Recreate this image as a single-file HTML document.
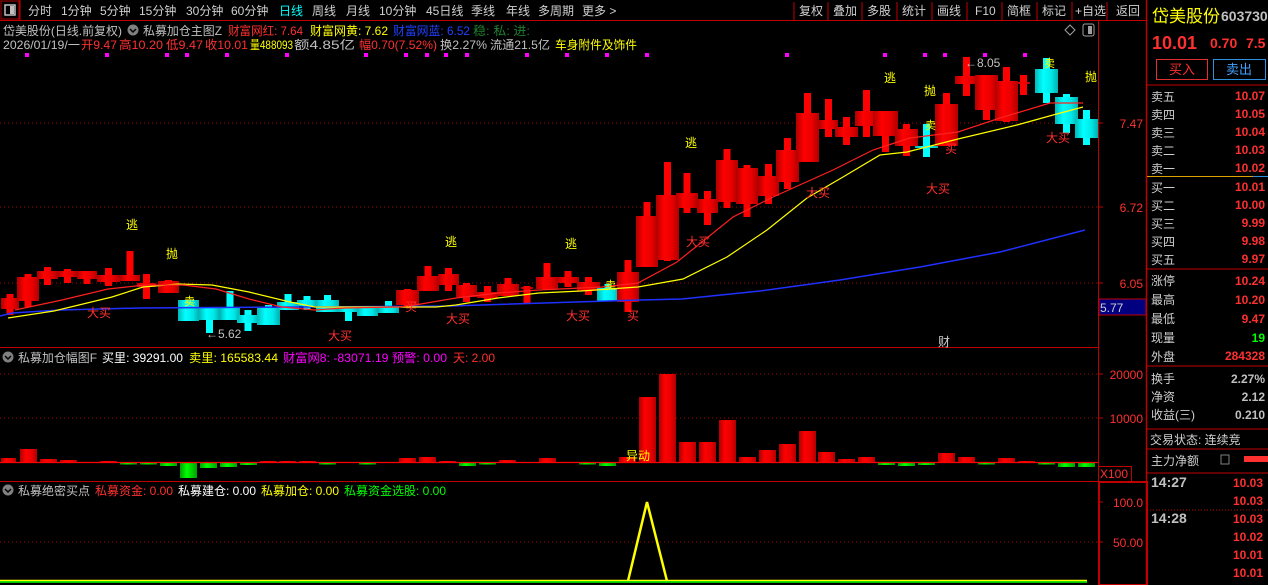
<!DOCTYPE html>
<html><head><meta charset="utf-8">
<style>
html,body{margin:0;padding:0;background:#000;width:1268px;height:585px;overflow:hidden}
svg{display:block}
text{font-family:"Liberation Sans","Noto Sans CJK SC",sans-serif;font-size:12px}
.w{fill:#d0d0d0}.r{fill:#ff3030}.y{fill:#ffff00}.g{fill:#c0c0c0}
.lab{font-size:15px;fill:#d0d0d0}
.val{font-size:14px;font-weight:bold;fill:#ff3030;text-anchor:end}
.ax{fill:#ff3030;text-anchor:end;font-size:12px}
</style></head><body>
<svg id="s" width="1268" height="585" viewBox="0 0 1268 585" xmlns="http://www.w3.org/2000/svg">
<defs>
<linearGradient id="gr" x1="0" x2="1" y1="0" y2="0"><stop offset="0" stop-color="#b00000"/><stop offset="0.35" stop-color="#ff0000"/><stop offset="0.7" stop-color="#e80000"/><stop offset="1" stop-color="#b00000"/></linearGradient>
<linearGradient id="gc" x1="0" x2="1" y1="0" y2="0"><stop offset="0" stop-color="#00b8b8"/><stop offset="0.35" stop-color="#00ffff"/><stop offset="0.7" stop-color="#00e8e8"/><stop offset="1" stop-color="#00b0b0"/></linearGradient>
<linearGradient id="gg" x1="0" x2="1" y1="0" y2="0"><stop offset="0" stop-color="#00a000"/><stop offset="0.4" stop-color="#00ff00"/><stop offset="1" stop-color="#00a000"/></linearGradient>
</defs>
<!-- toolbar -->
<rect x="1" y="1" width="18" height="18" fill="none" stroke="#b00000"/>
<rect x="5" y="5" width="10" height="10" fill="none" stroke="#c0c0c0" stroke-width="1.5"/><rect x="10" y="6" width="4" height="8" fill="#c0c0c0"/>
<line x1="20" y1="0" x2="20" y2="20" stroke="#c00000"/>
<g class="w">
<text x="28" y="15">分时</text><text x="61" y="15">1分钟</text><text x="100" y="15">5分钟</text><text x="139" y="15">15分钟</text><text x="186" y="15">30分钟</text><text x="231" y="15">60分钟</text><text x="279" y="15" style="fill:#00ffff">日线</text><text x="312" y="15">周线</text><text x="346" y="15">月线</text><text x="379" y="15">10分钟</text><text x="426" y="15">45日线</text><text x="471" y="15">季线</text><text x="506" y="15">年线</text><text x="538" y="15">多周期</text><text x="582" y="15">更多 &gt;</text>
<text x="799" y="15">复权</text><text x="833" y="15">叠加</text><text x="867" y="15">多股</text><text x="902" y="15">统计</text><text x="937" y="15">画线</text><text x="975" y="15">F10</text><text x="1007" y="15">简框</text><text x="1042" y="15">标记</text><text x="1075" y="15">+自选</text><text x="1116" y="15">返回</text>
</g>
<g stroke="#c00000"><line x1="794" y1="2" x2="794" y2="20"/><line x1="828" y1="2" x2="828" y2="20"/><line x1="862" y1="2" x2="862" y2="20"/><line x1="897" y1="2" x2="897" y2="20"/><line x1="932" y1="2" x2="932" y2="20"/><line x1="967" y1="2" x2="967" y2="20"/><line x1="1002" y1="2" x2="1002" y2="20"/><line x1="1037" y1="2" x2="1037" y2="20"/><line x1="1072" y1="2" x2="1072" y2="20"/><line x1="1107" y1="2" x2="1107" y2="20"/></g>
<line x1="0" y1="20.5" x2="1146" y2="20.5" stroke="#c00000"/>
<!-- frame lines -->
<line x1="1098.5" y1="21" x2="1098.5" y2="585" stroke="#c00000"/>
<line x1="1146.5" y1="0" x2="1146.5" y2="585" stroke="#c00000" stroke-width="1.5"/>
<line x1="0" y1="347.5" x2="1098" y2="347.5" stroke="#c00000"/>
<line x1="0" y1="481.5" x2="1098" y2="481.5" stroke="#c00000"/>
<g stroke="#a00000" stroke-dasharray="1,3"><line x1="0" y1="123" x2="1098" y2="123"/><line x1="0" y1="207" x2="1098" y2="207"/><line x1="0" y1="283" x2="1098" y2="283"/><line x1="0" y1="374" x2="1098" y2="374"/><line x1="0" y1="418" x2="1098" y2="418"/><line x1="0" y1="542" x2="1098" y2="542"/></g>
<!-- info rows -->
<text x="3" y="35" class="g" textLength="119" lengthAdjust="spacingAndGlyphs">岱美股份(日线.前复权)</text>
<circle cx="133" cy="30" r="5.5" fill="#808080"/><path d="M130 29 L133 32 L136 29" stroke="#000" fill="none" stroke-width="1.5"/>
<text x="143" y="35" class="g" textLength="79" lengthAdjust="spacingAndGlyphs">私募加仓主图Z</text>
<text x="228" y="35" class="r" textLength="75" lengthAdjust="spacingAndGlyphs">财富网红: 7.64</text>
<text x="310" y="35" class="y" textLength="78" lengthAdjust="spacingAndGlyphs">财富网黄: 7.62</text>
<text x="393" y="35" style="fill:#2040ff" textLength="77" lengthAdjust="spacingAndGlyphs">财富网蓝: 6.52</text>
<text x="473" y="35" style="fill:#208030" textLength="57" lengthAdjust="spacingAndGlyphs">稳: 私: 进:</text>
<text x="3" y="49" class="g" textLength="77" lengthAdjust="spacingAndGlyphs">2026/01/19/一</text>
<text x="81" y="49" class="r" textLength="36" lengthAdjust="spacingAndGlyphs">开9.47</text>
<text x="119" y="49" class="r" textLength="44" lengthAdjust="spacingAndGlyphs">高10.20</text>
<text x="166" y="49" class="r" textLength="37" lengthAdjust="spacingAndGlyphs">低9.47</text>
<text x="205" y="49" class="r" textLength="43" lengthAdjust="spacingAndGlyphs">收10.01</text>
<text x="250" y="49" class="y" textLength="43" lengthAdjust="spacingAndGlyphs">量488093</text>
<text x="294" y="49" class="g" textLength="61" lengthAdjust="spacingAndGlyphs">额4.85亿</text>
<text x="359" y="49" class="r" textLength="78" lengthAdjust="spacingAndGlyphs">幅0.70(7.52%)</text>
<text x="440" y="49" class="g" textLength="47" lengthAdjust="spacingAndGlyphs">换2.27%</text>
<text x="490" y="49" class="g" textLength="60" lengthAdjust="spacingAndGlyphs">流通21.5亿</text>
<text x="555" y="49" class="y" textLength="82" lengthAdjust="spacingAndGlyphs">车身附件及饰件</text>
<path d="M1070 25 L1075 30 L1070 35 L1065 30 Z" fill="none" stroke="#a0a0a0"/>
<rect x="1083" y="24" width="11" height="12" rx="2" fill="none" stroke="#a0a0a0"/><rect x="1088" y="26" width="4" height="8" fill="#a0a0a0"/>
<g id="dots" fill="#ff00ff"></g>
<g id="cand"></g>
<!-- MAs -->
<polyline fill="none" stroke="#2030ff" stroke-width="1.5" points="0,316 12,313 60,310 140,308 300,307 450,306 640,300 682,299 760,291 840,280 920,267 1000,252 1085,230"/>
<polyline fill="none" stroke="#ffff00" stroke-width="1.2" points="8,318 54,311 112,297 143,287 178,284 212,285 249,292 290,302 315,307 353,307 398,307 436,307 456,305 498,298 539,293 581,291 638,287 683,279 727,257 767,230 807,198 843,177 880,155 907,152 958,139 1017,125 1053,115 1083,107"/>
<polyline fill="none" stroke="#ff2020" stroke-width="1.2" points="15,310 62,300 108,289 145,285 183,285 216,289 249,299 282,307 315,310 344,308 398,307 415,305 456,298 498,293 539,290 602,287 638,283 677,262 733,217 773,197 833,170 873,150 910,138 958,132 1000,118 1050,103 1083,103"/>
<!-- labels -->
<g class="y"><text x="126" y="229">逃</text><text x="166" y="258">抛</text><text x="445" y="246">逃</text><text x="565" y="248">逃</text><text x="685" y="147">逃</text><text x="884" y="82">逃</text><text x="924" y="95">抛</text><text x="1085" y="81">抛</text>
<text x="184" y="305" style="font-size:11px">卖</text><text x="605" y="289" style="font-size:11px">卖</text><text x="925" y="129" style="font-size:11px">卖</text><text x="1044" y="67" style="font-size:11px">卖</text></g>
<g class="r"><text x="87" y="317">大买</text><text x="446" y="323">大买</text><text x="566" y="320">大买</text><text x="686" y="246">大买</text><text x="806" y="197">大买</text><text x="926" y="193">大买</text><text x="1046" y="142">大买</text><text x="627" y="320">买</text><text x="945" y="153">买</text><text x="405" y="311">买</text><text x="328" y="340">大买</text></g>
<text x="206" y="338" class="g">←5.62</text>
<text x="965" y="67" class="g">←8.05</text>
<text x="938" y="346" class="w">财</text>
<!-- axis main -->
<g stroke="#c00000"><line x1="1098" y1="123" x2="1103" y2="123"/><line x1="1098" y1="207" x2="1103" y2="207"/><line x1="1098" y1="283" x2="1103" y2="283"/><line x1="1098" y1="374" x2="1103" y2="374"/><line x1="1098" y1="418" x2="1103" y2="418"/><line x1="1098" y1="502" x2="1103" y2="502"/><line x1="1098" y1="542" x2="1103" y2="542"/></g>
<text x="1143" y="128" class="ax">7.47</text><text x="1143" y="212" class="ax">6.72</text><text x="1143" y="288" class="ax">6.05</text>
<rect x="1099" y="299" width="47" height="16" fill="#000080" stroke="#c00000"/><text x="1100" y="312" style="fill:#d0d0d0">5.77</text>
<!-- panel 1 -->
<circle cx="8" cy="357" r="5.5" fill="#808080"/><path d="M5 356 L8 359 L11 356" stroke="#000" fill="none" stroke-width="1.5"/>
<text x="18" y="362" class="g" textLength="79" lengthAdjust="spacingAndGlyphs">私募加仓幅图F</text>
<text x="102" y="362" style="fill:#fff" textLength="81" lengthAdjust="spacingAndGlyphs">买里: 39291.00</text>
<text x="189" y="362" class="y" textLength="89" lengthAdjust="spacingAndGlyphs">卖里: 165583.44</text>
<text x="283" y="362" style="fill:#ff00ff" textLength="164" lengthAdjust="spacingAndGlyphs">财富网8: -83071.19 预警: 0.00</text>
<text x="453" y="362" class="r" textLength="42" lengthAdjust="spacingAndGlyphs">天: 2.00</text>
<g id="vol"></g>
<line x1="0" y1="462.5" x2="1098" y2="462.5" stroke="#ff0000" stroke-width="1.2"/>
<text x="626" y="460" class="y">异动</text>
<text x="1143" y="379" class="ax">20000</text><text x="1143" y="423" class="ax">10000</text>
<rect x="1098.5" y="466.5" width="33" height="15" fill="none" stroke="#c00000"/><text x="1100" y="478" class="r">X100</text>
<!-- panel 2 -->
<circle cx="8" cy="490" r="5.5" fill="#808080"/><path d="M5 489 L8 492 L11 489" stroke="#000" fill="none" stroke-width="1.5"/>
<text x="18" y="495" class="g" textLength="72" lengthAdjust="spacingAndGlyphs">私募绝密买点</text>
<text x="95" y="495" class="r" textLength="78" lengthAdjust="spacingAndGlyphs">私募资金: 0.00</text>
<text x="178" y="495" style="fill:#fff" textLength="78" lengthAdjust="spacingAndGlyphs">私募建仓: 0.00</text>
<text x="261" y="495" class="y" textLength="78" lengthAdjust="spacingAndGlyphs">私募加仓: 0.00</text>
<text x="344" y="495" style="fill:#00ff00" textLength="102" lengthAdjust="spacingAndGlyphs">私募资金选股: 0.00</text>
<line x1="0" y1="580.5" x2="1087" y2="580.5" stroke="#ffff00" stroke-width="1.5"/>
<line x1="0" y1="582" x2="1087" y2="582" stroke="#00ff00" stroke-width="1.5"/>
<polyline points="628,581 647,502 667,581" fill="none" stroke="#ffff00" stroke-width="2.5"/>
<rect x="1099" y="482" width="48" height="103" fill="none" stroke="#c00000" stroke-width="2"/>
<text x="1143" y="507" class="ax">100.0</text><text x="1143" y="547" class="ax">50.00</text>
<!-- right panel -->
<text x="1152" y="22" style="font-size:17px;fill:#ffff00">岱美股份</text>
<text x="1221" y="21" style="font-size:14px;font-weight:bold;fill:#c0c0c0">603730</text>
<text x="1152" y="49" style="font-size:18px;font-weight:bold;fill:#ff3030">10.01</text>
<text x="1210" y="48" style="font-size:14px;font-weight:bold;fill:#ff3030">0.70</text>
<text x="1246" y="48" style="font-size:14px;font-weight:bold;fill:#ff3030">7.5</text>
<rect x="1156.5" y="59.5" width="51" height="20" fill="none" stroke="#e03030"/><text x="1169" y="74" style="fill:#ff3030;font-size:13px">买入</text>
<rect x="1213.5" y="59.5" width="52" height="20" fill="none" stroke="#3090e0"/><text x="1226" y="74" style="fill:#40a0ff;font-size:13px">卖出</text>
<g stroke="#c00000"><line x1="1147" y1="85" x2="1268" y2="85"/><line x1="1147" y1="269" x2="1268" y2="269"/><line x1="1147" y1="366" x2="1268" y2="366"/><line x1="1147" y1="429" x2="1268" y2="429"/><line x1="1147" y1="449" x2="1268" y2="449"/><line x1="1147" y1="473" x2="1268" y2="473"/></g>
<line x1="1147" y1="176.5" x2="1253" y2="176.5" stroke="#e0a000"/><line x1="1253" y1="176.5" x2="1268" y2="176.5" stroke="#3090e0"/>
<line x1="1147" y1="510" x2="1268" y2="510" stroke="#c00000" stroke-dasharray="1,2"/>
<g class="lab">
<text x="1151" y="101">卖五</text><text x="1151" y="119">卖四</text><text x="1151" y="137">卖三</text><text x="1151" y="155">卖二</text><text x="1151" y="173">卖一</text>
<text x="1151" y="192">买一</text><text x="1151" y="210">买二</text><text x="1151" y="228">买三</text><text x="1151" y="246">买四</text><text x="1151" y="264">买五</text>
<text x="1151" y="285">涨停</text><text x="1151" y="304">最高</text><text x="1151" y="323">最低</text><text x="1151" y="342">现量</text><text x="1151" y="361">外盘</text>
<text x="1151" y="383">换手</text><text x="1151" y="401">净资</text><text x="1151" y="419">收益(三)</text>
<text x="1150" y="444">交易状态: 连续竞</text><text x="1151" y="465">主力净额</text>
</g>
<rect x="1221" y="455" width="8" height="9" fill="none" stroke="#808080"/>
<rect x="1244" y="456" width="24" height="6" fill="#ff3030"/>
<g class="val">
<text x="1265" y="100">10.07</text><text x="1265" y="118">10.05</text><text x="1265" y="136">10.04</text><text x="1265" y="154">10.03</text><text x="1265" y="172">10.02</text>
<text x="1265" y="191">10.01</text><text x="1265" y="209">10.00</text><text x="1265" y="227">9.99</text><text x="1265" y="245">9.98</text><text x="1265" y="263">9.97</text>
<text x="1265" y="285">10.24</text><text x="1265" y="304">10.20</text><text x="1265" y="323">9.47</text><text x="1265" y="342" style="fill:#00ff00">19</text><text x="1265" y="360">284328</text>
<text x="1265" y="383" style="fill:#c0c0c0">2.27%</text><text x="1265" y="401" style="fill:#c0c0c0">2.12</text><text x="1265" y="419" style="fill:#c0c0c0">0.210</text>
<text x="1263" y="487">10.03</text><text x="1263" y="505">10.03</text><text x="1263" y="523">10.03</text><text x="1263" y="541">10.02</text><text x="1263" y="559">10.01</text><text x="1263" y="577">10.01</text>
</g>
<text x="1151" y="487" style="font-size:14px;font-weight:bold;fill:#c0c0c0">14:27</text>
<text x="1151" y="523" style="font-size:14px;font-weight:bold;fill:#c0c0c0">14:28</text>
</svg>
<script>
var NS="http://www.w3.org/2000/svg";
function R(p,x,y,w,h,f){var e=document.createElementNS(NS,"rect");e.setAttribute("x",x);e.setAttribute("y",y);e.setAttribute("width",w);e.setAttribute("height",Math.max(h,1.5));e.setAttribute("fill",f);p.appendChild(e);}
var C=[[1,19,298,309,294,315,'r'],[17,39,277,301,274,307,'r'],[37,58,271,279,267,285,'r'],[58,77,271,277,269,283,'r'],[77,97,271,279,271,284,'r'],[97,120,275,282,268,286,'r'],[120,140,275,281,251,281,'r'],[137,156,283,287,274,299,'r'],[158,179,281,293,280,293,'r'],[178,199,300,321,300,321,'c'],[199,220,307,320,307,333,'c'],[220,240,307,320,291,320,'c'],[237,259,315,323,310,331,'c'],[257,280,308,325,305,325,'c'],[277,299,302,310,294,310,'c'],[297,317,300,306,296,310,'c'],[316,339,300,312,295,312,'c'],[338,359,307,312,307,321,'c'],[357,378,307,316,307,316,'c'],[378,399,306,313,301,313,'c'],[396,419,290,305,289,306,'r'],[417,439,276,291,266,291,'r'],[438,459,274,285,268,291,'r'],[456,477,285,297,283,302,'r'],[477,498,292,298,286,302,'r'],[497,519,284,296,278,296,'r'],[521,533,287,289,286,303,'r'],[536,558,277,289,263,290,'r'],[557,579,277,283,271,287,'r'],[577,600,282,291,277,295,'r'],[597,619,288,301,284,301,'c'],[617,639,272,302,260,312,'r'],[636,658,216,267,202,267,'r'],[656,679,195,260,162,261,'r'],[676,698,193,208,173,213,'r'],[697,718,199,213,191,225,'r'],[716,738,160,202,149,208,'r'],[736,758,168,204,165,217,'r'],[758,779,176,196,164,204,'r'],[776,799,150,182,138,189,'r'],[796,819,113,162,93,162,'r'],[819,838,120,129,99,137,'r'],[835,858,127,137,117,145,'r'],[855,878,111,126,90,137,'r'],[873,898,111,136,111,152,'r'],[895,918,129,146,124,156,'r'],[915,938,146,148,124,157,'c'],[935,958,104,146,93,146,'r'],[955,978,76,84,57,96,'r'],[975,998,75,110,75,120,'r'],[995,1018,81,121,67,122,'r'],[1017,1030,82,84,75,95,'r'],[1035,1058,69,93,58,103,'c'],[1055,1078,97,124,94,133,'c'],[1075,1098,119,138,110,145,'c']];
var g=document.getElementById("cand");
C.forEach(function(c){var f=c[6]=='r'?'#ff0000':'#00ffff',gf=c[6]=='r'?'url(#gr)':'url(#gc)';var m=(c[0]+c[1])/2;R(g,m-3.5,c[4],7,c[5]-c[4],f);R(g,c[0],c[2],c[1]-c[0],c[3]-c[2],gf);});
var V=[[1,16,458],[20,37,449],[40,57,459],[60,77,460],[100,117,461],[120,137,-464],[140,157,-464],[160,177,-466],[180,197,-478],[200,217,-468],[220,237,-467],[240,257,-465],[260,277,461],[279,296,461],[299,316,461],[319,336,-464],[359,376,-464],[399,416,458],[419,436,457],[439,456,461],[459,476,-466],[479,496,-464],[499,516,460],[539,556,458],[579,596,-464],[599,616,-466],[619,636,457],[639,656,397],[659,676,374],[679,696,442],[699,716,442],[719,736,420],[739,756,457],[759,776,450],[779,796,444],[799,816,431],[818,835,452],[838,855,459],[858,875,457],[878,895,-465],[898,915,-466],[918,935,-465],[938,955,453],[958,975,457],[978,995,-464],[998,1015,458],[1018,1035,461],[1038,1055,-464],[1058,1075,-467],[1078,1095,-467]];
var v=document.getElementById("vol");
V.forEach(function(b){if(b[2]>0)R(v,b[0],b[2],b[1]-b[0],462-b[2],'url(#gr)');else R(v,b[0],463,b[1]-b[0],-b[2]-463,'url(#gg)');});
var d=document.getElementById("dots");
[27,107,167,187,227,287,366,406,427,446,467,527,567,607,647,787,885,925,945,985,1025].forEach(function(x){R(d,x-2,53,4,4,'#ff00ff');});
</script>
</body></html>
